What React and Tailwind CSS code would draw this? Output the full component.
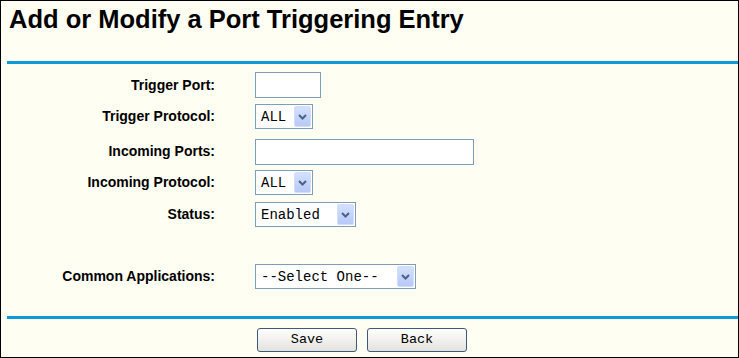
import React from 'react';

const sans = { fontFamily: '"Liberation Sans", Arial, sans-serif' };
const mono = { fontFamily: '"Liberation Mono", "Courier New", monospace' };

const Chevron = () => (
  <svg width="9" height="6" viewBox="0 0 9 6">
    <path d="M1 1 L4.5 4.5 L8 1" fill="none" stroke="#4d6185" strokeWidth="2" />
  </svg>
);

const Select = ({ value, width }) => (
  <div
    className="h-[25px] border border-[#7f9db9] bg-white flex items-center justify-between pl-[5px] pr-[1px]"
    style={{ width }}
  >
    <span className="text-[14px] text-black leading-none" style={mono}>{value}</span>
    <span className="w-[17px] h-[21px] rounded-[2px] border border-[#d2defb] bg-linear-to-b from-[#d4e0fd] to-[#b6c9f6] flex items-center justify-center">
      <Chevron />
    </span>
  </div>
);

const TextBox = ({ width }) => (
  <div className="h-[26px] border border-[#7f9db9] bg-white" style={{ width }} />
);

const Row = ({ label, className, children }) => (
  <div className={`h-[31px] flex items-center ${className || ''}`}>
    <div className="w-[214px] text-right text-[14px] font-bold text-black" style={sans}>{label}</div>
    <div className="ml-[40px]">{children}</div>
  </div>
);

const Button = ({ children }) => (
  <button
    className="h-[24px] w-[100px] rounded-[3px] border border-[#3d5a7d] bg-linear-to-b from-white to-[#e3e2dc] text-[13.5px] text-black leading-none"
    style={mono}
  >
    {children}
  </button>
);

export default function App() {
  return (
    <div className="w-[739px] h-[358px] border border-black bg-[#fefef3] flex flex-col overflow-hidden">
      <div className="h-[60px] pl-[8px] pt-[5px]">
        <h1 className="text-[25.5px] leading-[26px] font-bold text-black" style={sans}>
          Add or Modify a Port Triggering Entry
        </h1>
      </div>
      <div className="ml-[6px] h-[3px] bg-[#0e9ad4]" />

      <div className="pt-[5px]">
        <Row label="Trigger Port:" className="!h-[32px]">
          <TextBox width={66} />
        </Row>
        <Row label="Trigger Protocol:">
          <Select value="ALL" width={58} />
        </Row>
        <Row label="Incoming Ports:" className="mt-[4px]">
          <TextBox width={219} />
        </Row>
        <Row label="Incoming Protocol:">
          <Select value="ALL" width={58} />
        </Row>
        <Row label="Status:" className="mt-[1px]">
          <Select value="Enabled" width={101} />
        </Row>
        <Row label="Common Applications:" className="mt-[31px]">
          <Select value="--Select One--" width={161} />
        </Row>
      </div>

      <div className="mt-[24px] ml-[6px] h-[3px] bg-[#0e9ad4]" />

      <div className="mt-[9px] ml-[256px] flex gap-[10px]">
        <Button>Save</Button>
        <Button>Back</Button>
      </div>
    </div>
  );
}
